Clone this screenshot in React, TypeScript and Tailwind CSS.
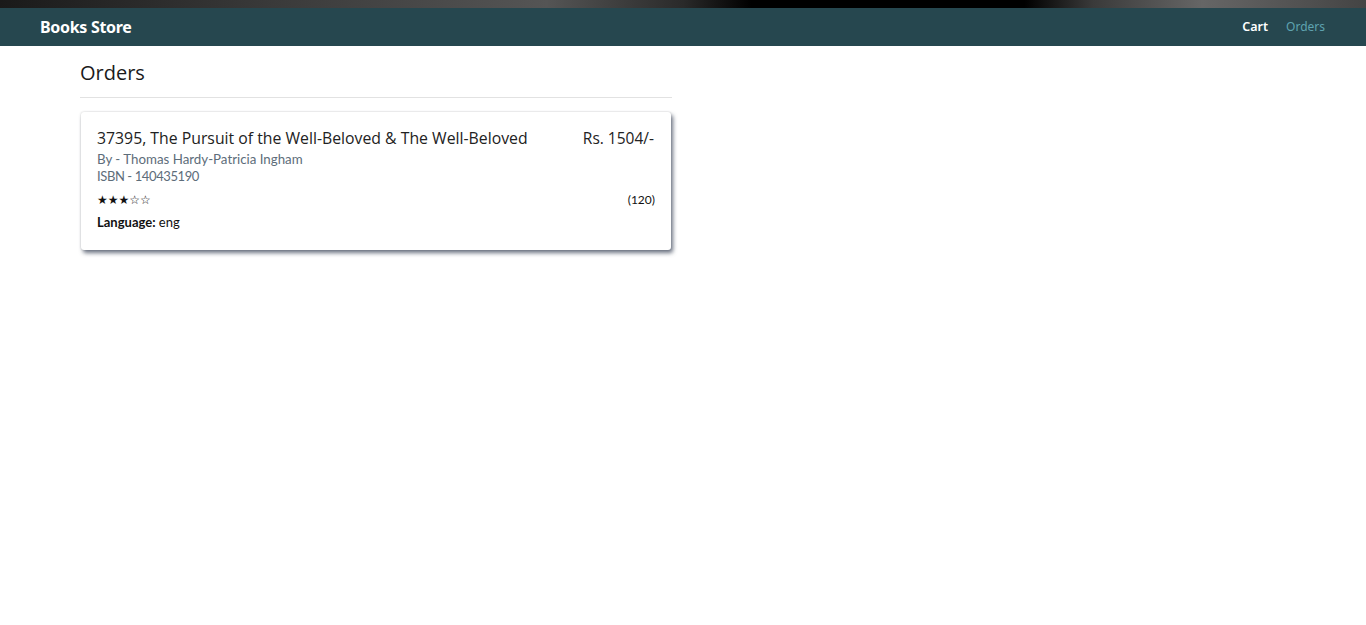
export default function App() {
  return (
    <div className="min-h-screen bg-white font-['Open_Sans',sans-serif]">
      <div className="h-[8px] bg-[linear-gradient(90deg,#1a1a1a_0%,#3a3a3a_20%,#555_40%,#2a2a2a_50%,#000_55%,#000_75%,#3a3a3a_80%,#666_88%,#444_100%)]" />
      <nav className="h-[38px] bg-[#26474f] flex items-center justify-between pl-[40px] pr-[41px]">
        <span className="text-white font-bold text-[16px] tracking-[-0.3px] font-['Noto_Sans',sans-serif]">Books Store</span>
        <div className="flex items-center gap-[18px] font-['Noto_Sans',sans-serif]">
          <a className="text-white font-semibold text-[12.5px]">Cart</a>
          <a className="text-[#5ea3b0] text-[12px]">Orders</a>
        </div>
      </nav>
      <main className="w-[592px] ml-[80px]">
        <h1 className="text-[20px] text-[#1a1a1a] pt-[14px] pb-[11px] leading-[26px]">Orders</h1>
        <hr className="border-[#e2e2e2]" />
        <div className="mt-[14px] mx-[1px] rounded-[3px] bg-white px-[16px] pt-[16px] pb-[19px] shadow-[2px_3px_4px_rgba(60,70,90,0.75),0_0_2px_rgba(0,0,0,0.2)]">
          <div className="flex justify-between items-start">
            <div className="text-[15.8px] text-[#222] leading-[20px]">37395, The Pursuit of the Well-Beloved &amp; The Well-Beloved</div>
            <div className="text-[15.5px] text-[#222] leading-[20px] pr-[1px]">Rs. 1504/-</div>
          </div>
          <div className="font-['Lato',sans-serif] text-[13.3px] text-[#5d6d7a] leading-[17px] mt-[3px]">By - Thomas Hardy-Patricia Ingham</div>
          <div className="font-['Lato',sans-serif] text-[13px] text-[#5d6d7a] leading-[17px] tracking-[-0.4px]">ISBN - 140435190</div>
          <div className="flex justify-between items-center mt-[7px] font-['Lato',sans-serif] text-[12px] text-[#111] leading-[16px]">
            <span className="text-[12px] font-['DejaVu_Sans',sans-serif]">★★★☆☆</span>
            <span>(120)</span>
          </div>
          <div className="font-['Lato',sans-serif] text-[13px] text-[#111] leading-[17px] mt-[6px]">
            <span className="font-bold">Language:</span> eng
          </div>
        </div>
      </main>
    </div>
  );
}
